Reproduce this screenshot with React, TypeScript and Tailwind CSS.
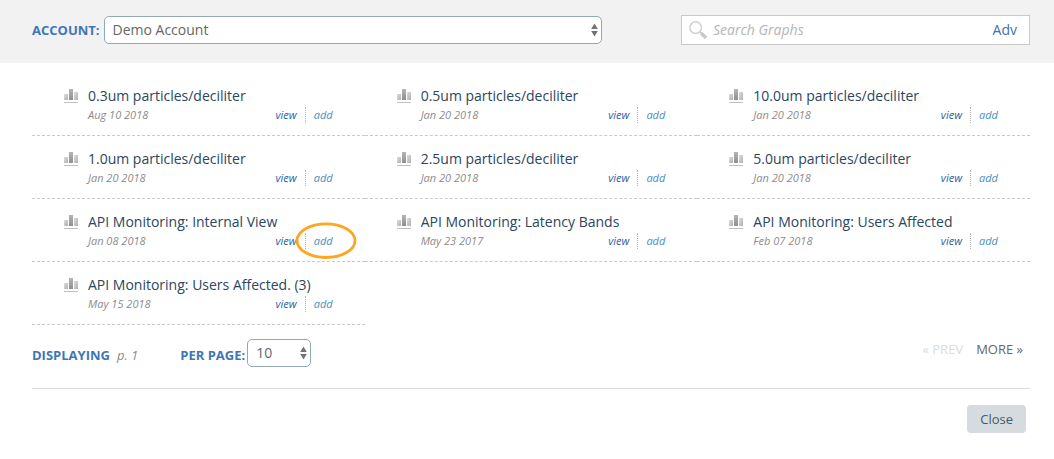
import React from 'react';

type Graph = { title: string; date: string; highlighted?: boolean };

const graphs: Graph[] = [
  { title: '0.3um particles/deciliter', date: 'Aug 10 2018' },
  { title: '0.5um particles/deciliter', date: 'Jan 20 2018' },
  { title: '10.0um particles/deciliter', date: 'Jan 20 2018' },
  { title: '1.0um particles/deciliter', date: 'Jan 20 2018' },
  { title: '2.5um particles/deciliter', date: 'Jan 20 2018' },
  { title: '5.0um particles/deciliter', date: 'Jan 20 2018' },
  { title: 'API Monitoring: Internal View', date: 'Jan 08 2018', highlighted: true },
  { title: 'API Monitoring: Latency Bands', date: 'May 23 2017' },
  { title: 'API Monitoring: Users Affected', date: 'Feb 07 2018' },
  { title: 'API Monitoring: Users Affected. (3)', date: 'May 15 2018' },
];

function BarsIcon() {
  return (
    <svg className="block h-[14px] w-[14px]" viewBox="0 0 14 14" aria-hidden="true">
      <defs>
        <linearGradient id="bar-light" x1="0" x2="1" y1="0" y2="1">
          <stop offset="0" stopColor="#dedede" />
          <stop offset="1" stopColor="#b0b0b0" />
        </linearGradient>
        <linearGradient id="bar-dark" x1="0" x2="0" y1="0" y2="1">
          <stop offset="0" stopColor="#b5b5b5" />
          <stop offset="1" stopColor="#8e8e8e" />
        </linearGradient>
      </defs>
      <rect x="0" y="5" width="4" height="6" fill="url(#bar-light)" />
      <rect x="5" y="0" width="4" height="11" fill="url(#bar-dark)" />
      <rect x="10" y="3" width="4" height="8" fill="url(#bar-light)" />
      <rect x="0" y="13" width="14" height="1" fill="#c0c0c0" />
    </svg>
  );
}

function SearchIcon() {
  return (
    <svg className="block h-[18px] w-[18px] shrink-0" viewBox="0 0 18 18" fill="none" aria-hidden="true">
      <circle cx="6.6" cy="6.6" r="5.8" stroke="#cfcfcf" strokeWidth="1.5" />
      <path d="M10.8 10.8l2 2" stroke="#c8c8c8" strokeWidth="1.5" />
      <path d="M12 12l5 5" stroke="#c8c8c8" strokeWidth="3.4" />
    </svg>
  );
}

function Arrows() {
  return (
    <svg
      className="pointer-events-none absolute top-1/2 right-1 h-[13px] w-[7px] -translate-y-1/2"
      viewBox="0 0 7 13"
      fill="#737373"
      aria-hidden="true"
    >
      <path d="M3.5 0L6.8 5.5H.2zM3.5 13L.2 7.5h6.6z" />
    </svg>
  );
}

function GraphItem({ title, date, highlighted }: Graph) {
  return (
    <li className="flex gap-[10px] border-b border-dashed border-[#cbcbcb] pt-[13px] pr-8 pb-3 pl-8">
      <div className="pt-[3px]">
        <BarsIcon />
      </div>
      <div className="min-w-0 flex-1">
        <h2 className="truncate text-sm leading-5 text-[#2b4660]">{title}</h2>
        <div className="flex h-[17px] items-center justify-between text-[11px] leading-4 italic">
          <span className="text-[#8c8c8c]">{date}</span>
          <div className="flex items-center">
            <a href="#view" className="pr-2 text-[#2b5fa3]">view</a>
            <span className="relative border-l border-dotted border-[#b5b5b5] pl-2">
              <a href="#add" className="text-[#4a8fbd]">add</a>
              {highlighted && (
                <svg
                  className="pointer-events-none absolute -top-[11px] -left-[11px] h-[38px] w-[62px]"
                  viewBox="0 0 62 38"
                  fill="none"
                  aria-hidden="true"
                >
                  <ellipse cx="31" cy="18.7" rx="29" ry="16.8" stroke="#fea621" strokeWidth="2.8" />
                </svg>
              )}
            </span>
          </div>
        </div>
      </div>
    </li>
  );
}

export default function App() {
  return (
    <div className="bg-white font-['Open_Sans',sans-serif] text-sm">
      <header className="flex items-center justify-between bg-[#f2f2f2] pt-[15px] pr-6 pb-[18px] pl-8">
        <div className="flex w-[570px] items-center gap-1">
          <label htmlFor="account" className="text-[13px] leading-5 font-bold text-[#3e76b8]">ACCOUNT:</label>
          <div className="relative flex-1">
            <select
              id="account"
              className="block h-7 w-full appearance-none rounded-[5px] border border-[#93a7ba] bg-white pl-2 text-sm text-[#666]"
            >
              <option>Demo Account</option>
            </select>
            <Arrows />
          </div>
        </div>
        <div className="flex h-[30px] w-[349px] items-center gap-[6px] border border-[#c9c9c9] bg-white pr-3 pl-[7px]">
          <SearchIcon />
          <input
            type="text"
            aria-label="Search Graphs"
            placeholder="Search Graphs"
            className="min-w-0 flex-1 text-sm outline-none placeholder:font-medium placeholder:text-[#b5b5b5] placeholder:italic"
          />
          <a href="#advanced" className="text-sm text-[#3a72b5]">Adv</a>
        </div>
      </header>

      <main className="pr-6 pl-8">
        <ul className="grid grid-cols-3 pt-[10px]">
          {graphs.map((graph) => (
            <GraphItem key={graph.title} {...graph} />
          ))}
        </ul>

        <div className="flex items-start justify-between border-b border-[#d5dade] pt-[14px] pb-[21px]">
          <div className="flex items-end text-[13px] leading-6">
            <span className="font-bold text-[#3e76b8]">DISPLAYING</span>
            <span className="pl-[7px] text-[#8c8c8c] italic">p. 1</span>
            <label htmlFor="per-page" className="pl-[42px] font-bold text-[#3e76b8]">PER PAGE:</label>
            <div className="relative ml-[2px] w-16">
              <select
                id="per-page"
                className="block h-7 w-full appearance-none rounded-[5px] border border-[#93a7ba] bg-white pl-2 text-sm text-[#666]"
              >
                <option>10</option>
              </select>
              <Arrows />
            </div>
          </div>
          <nav className="flex gap-[13px] pr-[7px] text-[13px] leading-5">
            <a href="#prev" className="text-[#dcdcdc]">« PREV</a>
            <a href="#more" className="text-[#666]">MORE »</a>
          </nav>
        </div>

        <div className="flex justify-end pt-4 pr-1">
          <button type="button" className="h-7 rounded bg-[#d6dbdf] px-[13px] text-[13px] text-[#465a66]">
            Close
          </button>
        </div>
      </main>
    </div>
  );
}
